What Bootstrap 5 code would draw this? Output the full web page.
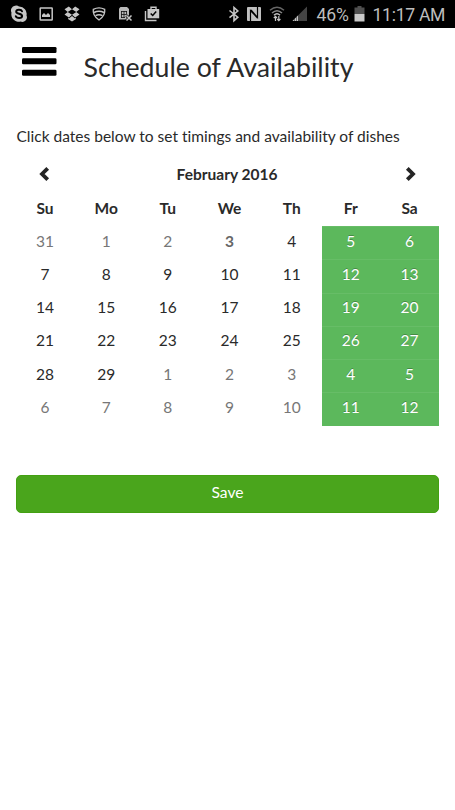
<!DOCTYPE html>
<html lang="en">
<head>
<meta charset="utf-8">
<meta name="viewport" content="width=device-width, initial-scale=1">
<title>Schedule of Availability</title>
<link href="https://cdn.jsdelivr.net/npm/bootstrap@5.3.0/dist/css/bootstrap.min.css" rel="stylesheet">
<style>
  body { font-family: Lato, "Open Sans", sans-serif; font-variant-ligatures: none; color: #2a2a2a; font-size: 15.500px; min-height: 810px; }
  .status-bar { height: 28px; background: #000; color: #bdbdbd; font-family: Roboto, sans-serif; font-size: 17.6px; line-height: 28px; padding: 0 10px 0 10px; }
  .status-bar svg { display: block; flex: none; }
  .status-bar span { padding-top: 2px; white-space: nowrap; }
  .status-left { gap: 8.5px; }
  .status-right { gap: 5px; }
  .nfc { margin-left: -3px; }
  .percent { margin-left: 3px; width: 32px; letter-spacing: -.2px; }
  .clock { margin-left: 3px; width: 72.5px; letter-spacing: -.3px; }
  .page-head { padding: 19px 0 0 22px; height: 80px; gap: 26.5px; }
  .page-title { font-size: 26.7px; line-height: 32px; padding-top: 4px; font-weight: 400; white-space: nowrap; }
  .schedule { padding: 0 16px 0 16px; }
  .hint { height: 51.5px; padding: 16px 0 0 .5px; line-height: 24px; white-space: nowrap; font-size: 15.53px; }
  .calendar { table-layout: fixed; width: 423px; border-collapse: separate; border-spacing: 0; line-height: 20px; }
  .calendar td, .calendar th { height: 33.25px; padding: 0 0 4px; text-align: center; vertical-align: middle; }
  .calendar th { padding-bottom: 3.500px; }
  .calendar svg { display: block; margin: 0 auto; }
  .calendar .prev { padding-right: 3px; }
  .calendar .other { color: #777; }
  .calendar .today { color: #666; font-weight: 700; }
  .calendar .open { background: #5cb85c; color: #fff; text-shadow: 0 -1px 0 rgba(0,0,0,.25); box-shadow: inset 0 1px 0 #67bd67; }
  .save-btn { margin-top: 49px; height: 38px; background: #4aa51c; border: 1px solid #43a012; border-radius: 5px; color: #fff; font-size: 15.6px; line-height: 20px; padding: 6px 0 10px; }
  .save-btn:hover { background: #43961a; color: #fff; }
</style>
</head>
<body class="bg-white">
<header class="status-bar d-flex justify-content-between align-items-center">
  <div class="status-left d-flex align-items-center">
    <svg width="18" height="18" viewBox="0 0 18 18"><path fill="#c6c6c6" d="M5 .8a5 5 0 0 1 4 .6A7.500 7.500 0 0 1 16.500 10.500 4.600 4.600 0 0 1 10.500 16.600 7.500 7.500 0 0 1 1.500 7.700 4.800 4.800 0 0 1 5 .8z"/><path d="M12 6.300C11.300 4.200 6.200 4.200 6.200 6.700c0 2.600 5.900 1.600 5.900 4.300 0 2.700-5.600 2.500-6.300.2" fill="none" stroke="#000" stroke-width="2" stroke-linecap="round"/></svg>
    <svg width="18" height="18" viewBox="0 0 18 18"><rect x="3.200" y="3" width="12" height="12" rx=".5" fill="none" stroke="#c6c6c6" stroke-width="1.500"/><path d="M5 12V10l2-2 2 2 2-2 2 2v2z" fill="#c6c6c6"/></svg>
    <svg width="18" height="18" viewBox="0 0 18 18" fill="#c6c6c6"><path d="M5.800 1.500L9 4.200 4.700 7 1.500 4.300zM12.200 1.500L9 4.200 13.300 7l3.200-2.700zM1.500 9.500L4.700 7 9 9.700l-3.200 2.700zM16.500 9.500L13.300 7 9 9.700l3.200 2.700zM5 12.800l.9.600L9 11l3.100 2.400.9-.6v1.200l-4 2.500-4-2.500z"/></svg>
    <svg width="18" height="18" viewBox="0 0 18 18" fill="none" stroke="#c6c6c6" stroke-width="1.300"><path d="M3.300 4.300Q9 1.400 14.700 4.300C15.500 9 12.500 12.500 9 15 5.500 12.500 2.500 9 3.300 4.300z"/><path d="M4 7.500Q9 5 14 7.500M5.500 10.700Q9 8.700 12.500 10.700" stroke-width="1.500"/></svg>
    <svg width="18" height="18" viewBox="0 0 18 18"><path d="M3 3.500L4.500 2H11l2 2v10.500H3z" fill="#b9b9b9"/><path d="M5 6.500h6M5 9.500h5M5 12.500h4M5.500 6v7M8 6v7M10.500 6v4" stroke="#111" stroke-width=".8"/><path d="M10.500 10.500l5 5m0-5l-5 5" stroke="#000" stroke-width="3"/><path d="M10.500 10.500l5 5m0-5l-5 5" stroke="#c6c6c6" stroke-width="1.500"/></svg>
    <svg width="18" height="18" viewBox="0 0 18 18"><path d="M2.500 6v9.500h11" fill="none" stroke="#c6c6c6" stroke-width="1.400"/><path d="M4.500 4h11.700v9.300H4.500z" fill="#c6c6c6"/><path d="M8 4V2.200h5V4" fill="none" stroke="#c6c6c6" stroke-width="1.400"/><path d="M7.700 8.500l2 2 3.500-4" fill="none" stroke="#000" stroke-width="1.500"/></svg>
  </div>
  <div class="status-right d-flex align-items-center">
    <svg width="18" height="18" viewBox="0 0 18 18"><path d="M4.500 5.500l8.300 6.700L9 15.700V2.500L12.800 6l-8.300 6.700" fill="none" stroke="#c6c6c6" stroke-width="1.600"/></svg>
    <svg class="nfc" width="18" height="18" viewBox="0 0 18 18"><rect x="2" y="2" width="14" height="14" rx="1" fill="#c0c0c0"/><path d="M5.500 16V5.500l7 7.500M12.500 2v10.500L6 5" fill="none" stroke="#000" stroke-width="1.200"/></svg>
    <svg width="18" height="18" viewBox="0 0 18 18" fill="none"><path d="M2 5.200Q9-.8 16 5.200" stroke="#666" stroke-width="1.500"/><path d="M4 8Q9 3.400 14 8" stroke="#888" stroke-width="1.500"/><path d="M6 10.200Q9 7.300 12 10.200" stroke="#c6c6c6" stroke-width="1.500"/><path d="M7.500 16v-4.500M5.800 13l1.700-1.700L9 13M10.800 11v4.500M9.200 14l1.600 1.700 1.600-1.700" stroke="#c6c6c6" stroke-width="1.200"/></svg>
    <svg width="18" height="18" viewBox="0 0 18 18"><path d="M1.500 16L16 1.500V16z" fill="#444"/><path d="M1.500 16L7 10.500V16z" fill="#c6c6c6"/><path d="M3.500 13v3M5.500 11v5" stroke="#222" stroke-width=".5"/></svg>
    <span class="percent">46%</span>
    <svg width="11" height="18" viewBox="0 0 11 18"><path d="M3.500 1h4v1.500h3V9H.5V2.500h3z" fill="#505050"/><path d="M.5 9h10v7.500H.5z" fill="#c9c9c9"/></svg>
    <span class="clock">11:17 AM</span>
  </div>
</header>
<main>
  <div class="page-head d-flex align-items-start">
    <a href="#" class="text-black lh-1" aria-label="Menu"><svg class="d-block" width="35" height="30" viewBox="0 0 35 30"><g fill="#000"><rect y="0" width="34.500" height="6" rx="1.300"/><rect y="11.300" width="34.500" height="6" rx="1.300"/><rect y="22.700" width="34.500" height="6" rx="1.300"/></g></svg></a>
    <h1 class="page-title m-0">Schedule of Availability</h1>
  </div>
  <section class="schedule">
    <p class="hint m-0">Click dates below to set timings and availability of dishes</p>
    <table class="calendar">
      <colgroup><col style="width:58px"><col style="width:64.5px"><col style="width:58.500px"><col style="width:65px"><col style="width:59.500px"><col style="width:58.5px"><col style="width:59px"></colgroup>
      <thead>
        <tr>
          <th class="prev"><svg width="12" height="16" viewBox="0 0 12 16"><path d="M9.700 2.300L4 8l5.700 5.700" fill="none" stroke="#252525" stroke-width="3.800"/></svg></th>
          <th colspan="5">February 2016</th>
          <th><svg width="12" height="16" viewBox="0 0 12 16"><path d="M3.300 2.300L9 8l-5.700 5.700" fill="none" stroke="#252525" stroke-width="3.800"/></svg></th>
        </tr>
        <tr><th>Su</th><th>Mo</th><th>Tu</th><th>We</th><th>Th</th><th>Fr</th><th>Sa</th></tr>
      </thead>
      <tbody>
        <tr><td class="other">31</td><td class="other">1</td><td class="other">2</td><td class="today">3</td><td>4</td><td class="open">5</td><td class="open">6</td></tr>
        <tr><td>7</td><td>8</td><td>9</td><td>10</td><td>11</td><td class="open">12</td><td class="open">13</td></tr>
        <tr><td>14</td><td>15</td><td>16</td><td>17</td><td>18</td><td class="open">19</td><td class="open">20</td></tr>
        <tr><td>21</td><td>22</td><td>23</td><td>24</td><td>25</td><td class="open">26</td><td class="open">27</td></tr>
        <tr><td>28</td><td>29</td><td class="other">1</td><td class="other">2</td><td class="other">3</td><td class="open">4</td><td class="open">5</td></tr>
        <tr><td class="other">6</td><td class="other">7</td><td class="other">8</td><td class="other">9</td><td class="other">10</td><td class="open">11</td><td class="open">12</td></tr>
      </tbody>
    </table>
    <button type="button" class="btn save-btn w-100">Save</button>
  </section>
</main>
<script src="https://cdn.jsdelivr.net/npm/bootstrap@5.3.0/dist/js/bootstrap.bundle.min.js"></script>
</body>
</html>
